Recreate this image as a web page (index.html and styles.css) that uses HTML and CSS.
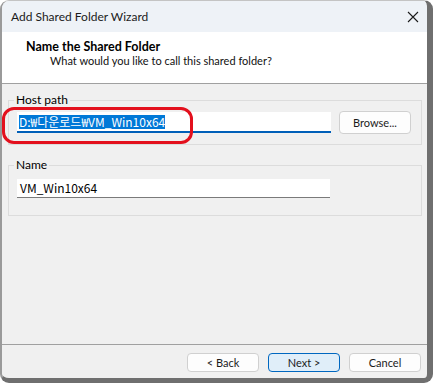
FILE: index.html
```html
<!DOCTYPE html>
<html>
<head>
<meta charset="utf-8">
<link rel="stylesheet" href="styles.css">
</head>
<body>
<div class="window">
  <div class="titlebar">
    <span class="title">Add Shared Folder Wizard</span>
    <svg class="close" width="12" height="12" viewBox="0 0 12 12"><path d="M1 1 L11 11 M11 1 L1 11" stroke="#1b1b1b" stroke-width="1.1" fill="none"/></svg>
  </div>
  <div class="header">
    <div class="h-title">Name the Shared Folder</div>
    <div class="h-sub">What would you like to call this shared folder?</div>
  </div>
  <div class="content">
    <fieldset class="group group-host">
      <legend>Host path</legend>
      <div class="row">
        <div class="input input-host"><span class="sel">D:₩다운로드₩VM_Win10x64</span></div>
        <div class="btn btn-browse">Browse...</div>
      </div>
    </fieldset>
    <fieldset class="group group-name">
      <legend>Name</legend>
      <div class="input input-name">VM_Win10x64</div>
    </fieldset>
    <div class="annot"></div>
  </div>
  <div class="footer">
    <div class="btn">&lt; Back</div>
    <div class="btn btn-default">Next &gt;</div>
    <div class="btn">Cancel</div>
  </div>
</div>
</body>
</html>
```
FILE: styles.css
```css
html, body {
  margin: 0;
  padding: 0;
  background: #ffffff;
}
body {
  font-family: "Lato", "Noto Sans CJK KR", sans-serif;
  font-size: 12px;
  color: #000;
}
.window {
  box-sizing: border-box;
  width: 433px;
  height: 383px;
  border-left: 2px solid #9a9a9a;
  border-top: 1px solid #c4c4c4;
  border-right: 6px solid #6f6f6f;
  border-bottom: 5px solid #6f6f6f;
  border-radius: 9px;
  overflow: hidden;
  background: #f0f0f0;
  display: flex;
  flex-direction: column;
}
.titlebar {
  height: 31px;
  flex: none;
  background: #eef2f7;
  display: flex;
  align-items: center;
  justify-content: space-between;
  padding: 0 8px 0 9px;
}
.title {
  font-size: 12px;
  color: #1b1b1b;
  line-height: 14px;
}
.close {
  display: block;
}
.header {
  flex: none;
  background: #ffffff;
  border-bottom: 1px solid #a0a0a0;
  box-sizing: border-box;
  height: 52px;
  padding: 8px 0 0 24px;
}
.h-title {
  font-weight: bold;
  line-height: 13px;
  font-size: 12.5px;
}
.h-sub {
  line-height: 13px;
  margin-top: 1px;
  padding-left: 24px;
  font-size: 11px;
  color: #111;
}
.content {
  position: relative;
  flex: 1;
  padding: 9px 5px 0 6px;
}
.group {
  margin: 0;
  border: 1px solid #dcdcdc;
  padding: 4px 9px 10px 8px;
}
.group legend {
  padding: 0 2px;
  margin-left: -3px;
  line-height: 14px;
  font-size: 12px;
}
.row {
  display: flex;
  align-items: center;
  gap: 8px;
}
.input {
  box-sizing: border-box;
  background: #ffffff;
  line-height: 14px;
  font-family: "Noto Sans CJK KR", sans-serif;
  font-size: 12px;
}
.input-host {
  width: 314px;
  height: 21px;
  border-bottom: 2px solid #005fb8;
  padding: 3px 0 0 2px;
}
.sel {
  background: #0078d7;
  color: #ffffff;
  display: inline-block;
  line-height: 14px;
  padding: 0;
}
.btn {
  box-sizing: border-box;
  width: 72px;
  height: 19px;
  border: 1px solid #d0d0d0;
  border-radius: 4px;
  background: #fdfdfd;
  display: flex;
  align-items: center;
  justify-content: center;
  line-height: 14px;
  color: #1b1b1b;
  font-size: 11px;
}
.btn-browse {
  height: 23px;
}
.btn-default {
  background: #e0eef9;
  border-color: #0067c0;
}
.annot {
  position: absolute;
  left: 0;
  top: 23px;
  width: 191px;
  height: 37px;
  box-sizing: border-box;
  border: 3px solid #e3101d;
  border-radius: 12px;
}
.group-name {
  margin-top: 13px;
  padding: 7px 9px 17px 8px;
}
.input-name {
  width: 313px;
  height: 19px;
  border-bottom: 1px solid #7a7a7a;
  padding: 2px 0 0 3px;
}
.footer {
  flex: none;
  height: 34px;
  box-sizing: border-box;
  border-top: 1px solid #a0a0a0;
  display: flex;
  justify-content: flex-end;
  gap: 9px;
  padding: 8px 6px 0 0;
}
```
